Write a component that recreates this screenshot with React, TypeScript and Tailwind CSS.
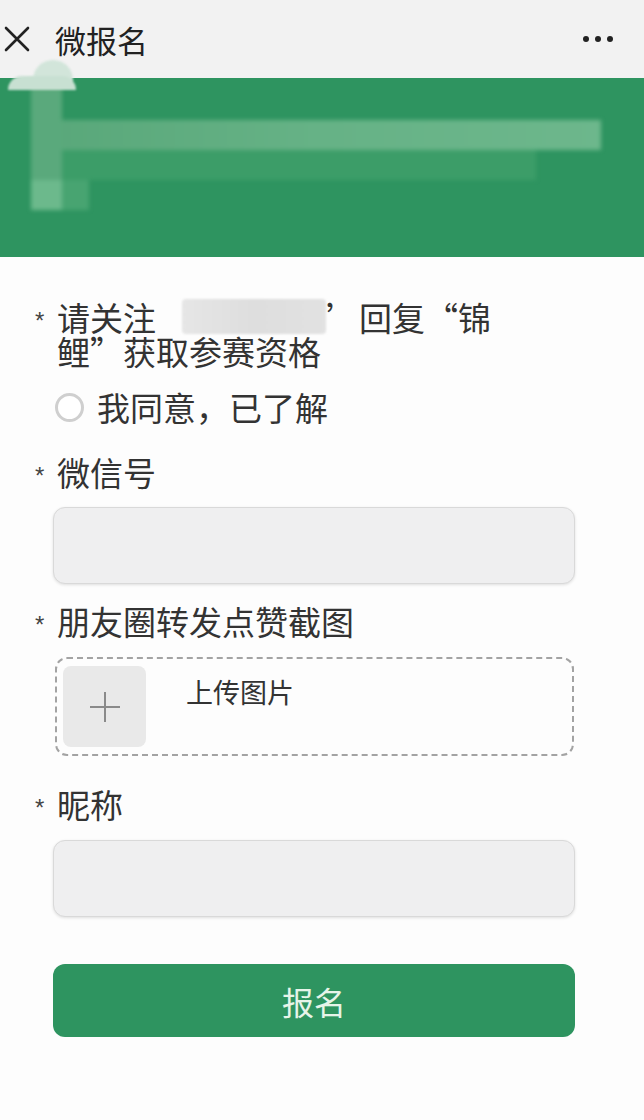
import React from 'react';

const font = { fontFamily: '"Noto Sans CJK SC", "Noto Sans", sans-serif' };

const CloseIcon = () => (
    <svg width="28" height="26" viewBox="0 0 28 26" fill="none" stroke="#222" strokeWidth={2.6} strokeLinecap="round">
        <path d="M3 2l22 22M25 2L3 24" />
    </svg>
);

const PlusIcon = () => (
    <svg width="32" height="32" viewBox="0 0 32 32" fill="none" stroke="#8a8a8a" strokeWidth={2}>
        <path d="M16 1v30M1 16h30" />
    </svg>
);

const Label: React.FC<{ children: React.ReactNode }> = ({ children }) => (
    <div className="flex pl-[35px]">
        <span className="w-[22px] shrink-0 pt-[9px] text-[24px] leading-none text-[#444]" style={{ fontFamily: '"Liberation Sans", sans-serif' }}>*</span>
        <div className="text-[33px] leading-[34px] text-[#333]">{children}</div>
    </div>
);

const Field = () => (
    <div className="ml-[53px] w-[522px] h-[77px] rounded-xl bg-[#efeff0] border border-[#d9d9d9] shadow-[0_1px_3px_rgba(0,0,0,0.12)]" />
);

const Banner = () => (
    <div className="relative h-[179px] bg-[#2e9460] overflow-visible">
        <div className="absolute inset-0 blur-[2px]">
            <div className="absolute left-[31px] top-[42px] w-[570px] h-[30px] bg-gradient-to-r from-[#58a779] via-[#66b286] to-[#6db78c]" />
            <div className="absolute left-[31px] top-[72px] w-[505px] h-[30px] bg-[#3c9d68]" />
            <div className="absolute left-[31px] top-[2px] w-[31px] h-[130px] bg-[#5aa97c]" />
            <div className="absolute left-[31px] top-[102px] w-[31px] h-[30px] bg-[#6cb98c]" />
            <div className="absolute left-[62px] top-[102px] w-[27px] h-[30px] bg-[#48a471]" />
        </div>
        <div className="absolute left-[8px] -top-[18px] w-[68px] h-[30px] blur-[1px]">
            <div className="absolute left-[25px] top-0 w-[40px] h-[30px] rounded-t-full bg-[#d2e5da]" />
            <div className="absolute left-0 top-[16px] w-[68px] h-[14px] rounded-t-full bg-[#c8e0d2]" />
        </div>
    </div>
);

export default function App() {
    return (
        <div className="w-[644px] h-[1120px] bg-[#fdfdfd] overflow-hidden" style={font}>
            <div className="h-[78px] bg-[#f2f2f2] flex items-center pl-[3px] pr-[31px]">
                <CloseIcon />
                <span className="ml-[24px] text-[31px] leading-none text-[#222]">微报名</span>
                <div className="ml-auto flex gap-[6px]">
                    <span className="w-[6px] h-[6px] rounded-full bg-[#222]" />
                    <span className="w-[6px] h-[6px] rounded-full bg-[#222]" />
                    <span className="w-[6px] h-[6px] rounded-full bg-[#222]" />
                </div>
            </div>

            <Banner />

            <div className="pt-[43px] flex flex-col">
                <Label>
                    <span>请关注</span>
                    <span className="inline-block align-top ml-[26px] mt-[-1px] w-[144px] h-[35px] rounded-sm bg-gradient-to-r from-[#e6e6e6] via-[#dedede] to-[#e2e2e2] blur-[1px]" />
                    <span>’回复“锦</span>
                    <br />
                    <span>鲤”获取参赛资格</span>
                </Label>

                <div className="mt-[24px] ml-[55px] flex items-center">
                    <span className="w-[29px] h-[29px] rounded-full border-[3px] border-[#cfcfcf] bg-white" />
                    <span className="ml-[13px] text-[33px] leading-[30px] text-[#333]">我同意，已了解</span>
                </div>

                <div className="mt-[33px]">
                    <Label>微信号</Label>
                </div>
                <div className="mt-[18px]">
                    <Field />
                </div>

                <div className="mt-[20px]">
                    <Label>朋友圈转发点赞截图</Label>
                </div>
                <div className="mt-[19px] ml-[55px] w-[519px] h-[99px] rounded-xl border-2 border-dashed border-[#a3a3a3] flex items-start px-[6px] pt-[7px]">
                    <div className="w-[83px] h-[81px] rounded-lg bg-[#e9e9e9] flex items-center justify-center">
                        <PlusIcon />
                    </div>
                    <span className="ml-[40px] mt-[12px] text-[27px] leading-none text-[#333]">上传图片</span>
                </div>

                <div className="mt-[31px]">
                    <Label>昵称</Label>
                </div>
                <div className="mt-[19px]">
                    <Field />
                </div>

                <button className="mt-[47px] ml-[53px] w-[522px] h-[73px] rounded-xl bg-[#2e9460] text-[32px] leading-none text-[#e6f4e9]">
                    报名
                </button>
            </div>
        </div>
    );
}
